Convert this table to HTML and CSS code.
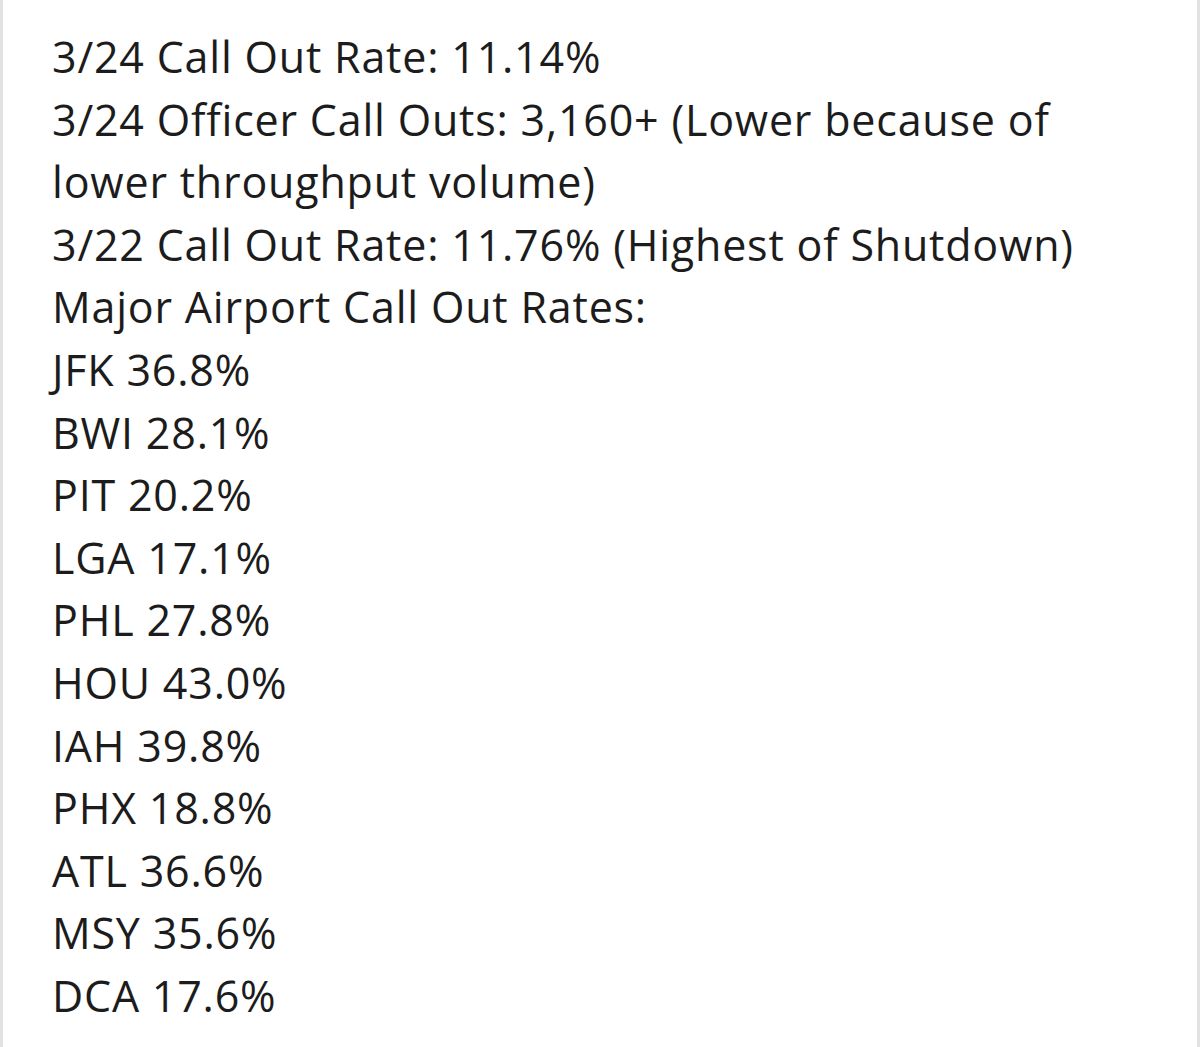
FILE: index.html
```html
<!DOCTYPE html>
<html lang="en">
<head>
<meta charset="utf-8">
<title>Call Out Rates</title>
<link rel="stylesheet" href="styles.css">
</head>
<body>
<div class="page">
  <div class="lines">
    <div class="line">3/24 Call Out Rate: 11.14%</div>
    <div class="line">3/24 Officer Call Outs: 3,160+ (Lower because of</div>
    <div class="line">lower throughput volume)</div>
    <div class="line">3/22 Call Out Rate: 11.76% (Highest of Shutdown)</div>
    <div class="line">Major Airport Call Out Rates:</div>
    <div class="line">JFK 36.8%</div>
    <div class="line">BWI 28.1%</div>
    <div class="line">PIT 20.2%</div>
    <div class="line">LGA 17.1%</div>
    <div class="line">PHL 27.8%</div>
    <div class="line">HOU 43.0%</div>
    <div class="line">IAH 39.8%</div>
    <div class="line">PHX 18.8%</div>
    <div class="line">ATL 36.6%</div>
    <div class="line">MSY 35.6%</div>
    <div class="line">DCA 17.6%</div>
  </div>
</div>
</body>
</html>
```
FILE: styles.css
```css
html, body {
  margin: 0;
  padding: 0;
  background: #ffffff;
}
.page {
  width: 1200px;
  height: 1047px;
  box-sizing: border-box;
  border-left: 3px solid #e2e2e2;
  border-right: 3px solid #e2e2e2;
  background: #ffffff;
  overflow: hidden;
}
.lines {
  padding: 26px 0 0 49px;
  font-family: "Open Sans", "Noto Sans", sans-serif;
  font-size: 43px;
  line-height: 62.6px;
  letter-spacing: 0.8px;
  color: #1c1c1c;
}
.line {
  white-space: nowrap;
}
```
